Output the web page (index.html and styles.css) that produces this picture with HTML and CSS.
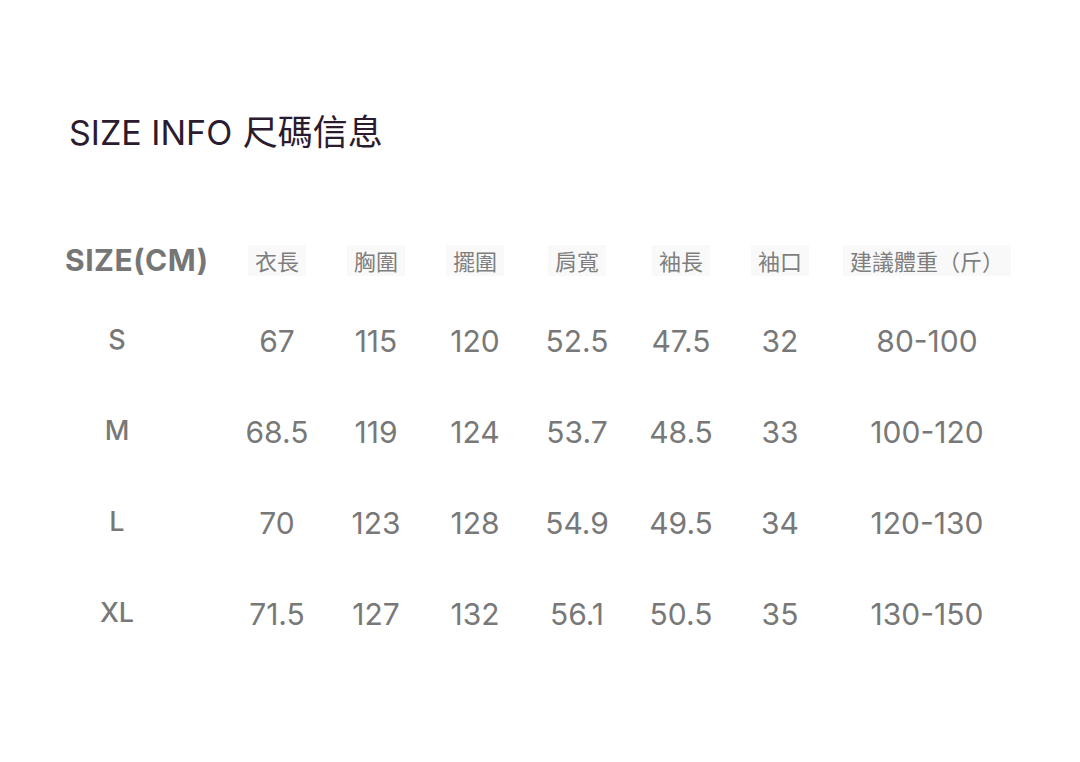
FILE: index.html
```html
<!DOCTYPE html>
<html lang="zh-Hant">
<head>
<meta charset="utf-8">
<title>SIZE INFO 尺碼信息</title>
<link rel="stylesheet" href="styles.css">
</head>
<body>
<main class="page">
  <h1 class="title">SIZE INFO <span class="title-cjk">尺碼信息</span></h1>
  <div class="table">
    <div class="row head">
      <div class="cell label-head">SIZE(CM)</div>
      <div class="cell"><span class="chip">衣長</span></div>
      <div class="cell"><span class="chip">胸圍</span></div>
      <div class="cell"><span class="chip">擺圍</span></div>
      <div class="cell"><span class="chip">肩寬</span></div>
      <div class="cell"><span class="chip">袖長</span></div>
      <div class="cell"><span class="chip">袖口</span></div>
      <div class="cell"><span class="chip">建議體重（斤）</span></div>
    </div>
    <div class="row data">
      <div class="cell size">S</div>
      <div class="cell">67</div>
      <div class="cell">115</div>
      <div class="cell">120</div>
      <div class="cell">52.5</div>
      <div class="cell">47.5</div>
      <div class="cell">32</div>
      <div class="cell">80-100</div>
    </div>
    <div class="row data">
      <div class="cell size">M</div>
      <div class="cell">68.5</div>
      <div class="cell">119</div>
      <div class="cell">124</div>
      <div class="cell">53.7</div>
      <div class="cell">48.5</div>
      <div class="cell">33</div>
      <div class="cell">100-120</div>
    </div>
    <div class="row data">
      <div class="cell size">L</div>
      <div class="cell">70</div>
      <div class="cell">123</div>
      <div class="cell">128</div>
      <div class="cell">54.9</div>
      <div class="cell">49.5</div>
      <div class="cell">34</div>
      <div class="cell">120-130</div>
    </div>
    <div class="row data">
      <div class="cell size">XL</div>
      <div class="cell">71.5</div>
      <div class="cell">127</div>
      <div class="cell">132</div>
      <div class="cell">56.1</div>
      <div class="cell">50.5</div>
      <div class="cell">35</div>
      <div class="cell">130-150</div>
    </div>
  </div>
</main>
</body>
</html>
```

FILE: styles.css
```css
* { box-sizing: border-box; }
html, body {
  margin: 0;
  padding: 0;
  background: #ffffff;
}
body {
  width: 1080px;
  height: 762px;
  overflow: hidden;
  font-family: Inter, "Noto Sans CJK TC", sans-serif;
}
.page {
  padding-top: 110px;
}
.title {
  margin: 0 0 0 69px;
  font-size: 34px;
  line-height: 40px;
  font-weight: 400;
  color: #2b1b2f;
}
.title-cjk {
  font-family: "Noto Sans CJK TC", sans-serif;
  font-size: 35px;
  margin-left: 1px;
}
.table {
  margin-top: 87px;
  padding-left: 7px;
}
.row {
  display: grid;
  grid-template-columns: 220px 100px 98px 100px 104px 104px 94px 200px;
  align-items: center;
}
.row.head {
  height: 40px;
  margin-bottom: 13px;
}
.row.data {
  height: 91px;
}
.cell {
  text-align: center;
  white-space: nowrap;
  color: #787878;
}
.label-head {
  text-align: left;
  padding-left: 58px;
  font-size: 30px;
  font-weight: 700;
  letter-spacing: 0.5px;
  color: #767676;
}
.chip {
  display: inline-block;
  padding: 3px 7px;
  background: #f9f9f9;
  font-family: "Noto Sans CJK TC", sans-serif;
  font-size: 22px;
  line-height: 25px;
  color: #7e7e7e;
}
.data .cell {
  font-size: 30px;
  line-height: 36px;
  padding-top: 5px;
}
.data .cell.size {
  font-size: 27px;
  font-weight: 500;
  padding-top: 2px;
  padding-bottom: 0;
}
```
